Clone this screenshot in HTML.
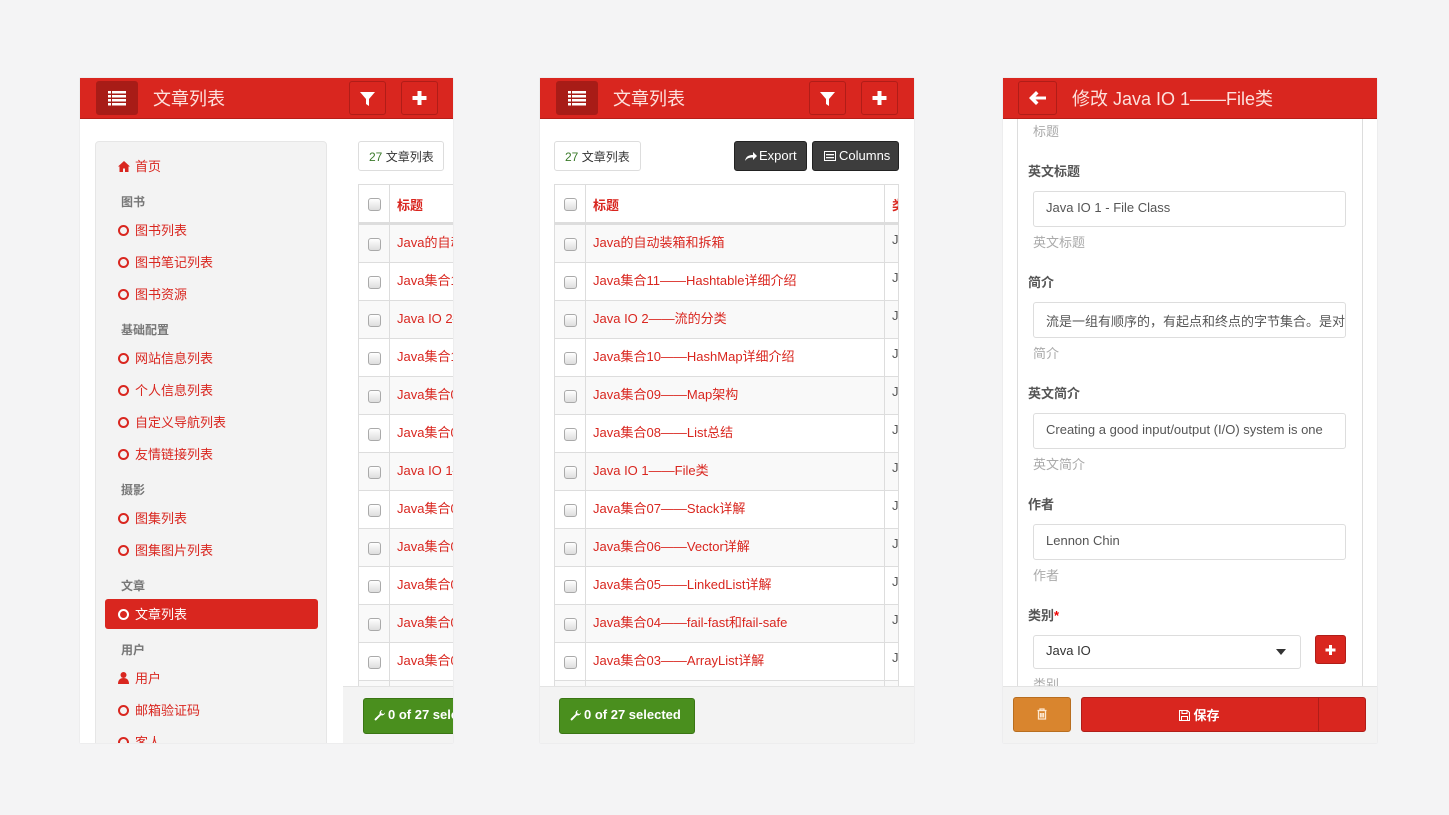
<!DOCTYPE html>
<html><head><meta charset="utf-8"><style>
*{box-sizing:border-box;margin:0;padding:0}
body{width:1449px;height:815px;background:#f4f4f5;font-family:"Liberation Sans","Noto Sans CJK SC",sans-serif;font-size:13px;color:#333;position:relative;overflow:hidden}
.a{position:absolute}
.panel{position:absolute;top:78px;height:665px;background:#fff;overflow:hidden;box-shadow:0 0 1px rgba(0,0,0,.15)}
.hdr{position:absolute;left:0;top:0;right:0;height:41px;background:#d9261f;border-bottom:1px solid #b81e18}
.hb{position:absolute;top:3px;width:37px;height:34px;border:1px solid #b01d18;border-radius:3px;background:#d9261f}
.ht{position:absolute;top:7px;color:#fde0dc;font-size:18px}
.sb{position:absolute;left:15px;top:63px;width:232px;height:620px;background:#f3f3f3;border:1px solid #e6e6e6;border-radius:4px}
.si{position:absolute;left:22px;color:#d9261f;font-size:13px;margin-top:-2px}
.si i{display:inline-block;width:11px;height:11px;border:2px solid #d9261f;border-radius:50%;margin-right:6px;vertical-align:-1px}
.sh{position:absolute;left:25px;color:#777;font-size:12px;font-weight:bold;margin-top:-2px}
.tbl{position:absolute;border:1px solid #ddd;overflow:hidden}
.row{position:absolute;left:0;height:38px;border-top:1px solid #ddd;width:100%}
.row .cb,.hrow .cb{position:absolute;left:9px;top:13px;width:13px;height:13px;border:1px solid #aaa;border-radius:3px;background:linear-gradient(#fff,#ddd)}
.row .t{position:absolute;left:38px;top:7px;color:#d9261f;white-space:nowrap}
.vl{position:absolute;top:0;bottom:0;width:1px;background:#ddd}
.bot{position:absolute;height:57px;top:608px;background:#f3f3f3;border-top:1px solid #e3e3e3}
.gbtn{position:absolute;top:11px;height:36px;background:#4a8f1e;border:1px solid #3a7514;border-radius:3px;color:#fff;font-weight:bold;font-size:13px;padding:8px 0 0 10px;white-space:nowrap;overflow:hidden}
.gbtn svg{vertical-align:-2px;margin-right:2px}
.lab{position:absolute;left:25px;font-weight:bold;color:#555;font-size:13px;margin-top:-1px}
.hint{position:absolute;left:30px;color:#aaa;font-size:13px;margin-top:-1px}
.inp{position:absolute;left:30px;width:313px;height:36px;border:1px solid #ddd;border-radius:3px;padding:8px 12px;color:#555;white-space:nowrap;overflow:hidden}
</style></head><body>

<!-- Panel 1 -->
<div class="panel" style="left:80px;width:373px">
 <div class="hdr">
  <div class="hb" style="left:16px;background:#a81c17;border-color:#a81c17;width:42px"><svg width="40" height="32" viewBox="0 0 40 32"><g fill="#fff"><rect x="11" y="9" width="3" height="2.5"/><rect x="15" y="9" width="14" height="2.5"/><rect x="11" y="13" width="3" height="2.5"/><rect x="15" y="13" width="14" height="2.5"/><rect x="11" y="17" width="3" height="2.5"/><rect x="15" y="17" width="14" height="2.5"/><rect x="11" y="21" width="3" height="2.5"/><rect x="15" y="21" width="14" height="2.5"/></g></svg></div>
  <div class="ht" style="left:73px">文章列表</div>
  <div class="hb" style="left:269px"><svg width="35" height="32"><path d="M10 10h15l-6 7v7l-3-2v-5z" fill="#fff"/></svg></div>
  <div class="hb" style="left:321px"><svg width="35" height="32"><path d="M15.5 9h4v5h5v4h-5v5h-4v-5h-5v-4h5z" fill="#fff"/></svg></div>
 </div>
 <div class="sb">
  <div class="si" style="top:16px"><svg width="12" height="11" style="margin-right:5px;vertical-align:-1px"><path d="M6 0L0 5.5h1.5V11h3.5V7.5h2V11h3.5V5.5H12z" fill="#d9261f"/></svg>首页</div>
  <div class="sh" style="top:53px">图书</div>
  <div class="si" style="top:80px"><i></i>图书列表</div>
  <div class="si" style="top:112px"><i></i>图书笔记列表</div>
  <div class="si" style="top:144px"><i></i>图书资源</div>
  <div class="sh" style="top:181px">基础配置</div>
  <div class="si" style="top:208px"><i></i>网站信息列表</div>
  <div class="si" style="top:240px"><i></i>个人信息列表</div>
  <div class="si" style="top:272px"><i></i>自定义导航列表</div>
  <div class="si" style="top:304px"><i></i>友情链接列表</div>
  <div class="sh" style="top:341px">摄影</div>
  <div class="si" style="top:368px"><i></i>图集列表</div>
  <div class="si" style="top:400px"><i></i>图集图片列表</div>
  <div class="sh" style="top:437px">文章</div>
  <div class="a" style="left:9px;top:457px;width:213px;height:30px;background:#d9261f;border-radius:3px"></div>
  <div class="si" style="top:464px;color:#fff"><i style="border-color:#fff"></i>文章列表</div>
  <div class="sh" style="top:501px">用户</div>
  <div class="si" style="top:528px"><svg width="11" height="12" style="margin-right:6px;vertical-align:-1px"><circle cx="5.5" cy="3" r="3" fill="#d9261f"/><path d="M0 12c0-4 2-6 5.5-6S11 8 11 12z" fill="#d9261f"/></svg>用户</div>
  <div class="si" style="top:560px"><i></i>邮箱验证码</div>
  <div class="si" style="top:592px"><i></i>客人</div>
 </div>
 <div class="a" style="left:278px;top:63px;width:86px;height:30px;border:1px solid #ddd;border-radius:3px;padding:6px 0 0 10px;font-size:12px;white-space:nowrap"><span style="color:#3a7a2a">27</span> 文章列表</div>
 <div class="tbl" style="left:278px;top:106px;width:110px;height:520px;border-right:none"></div>
</div>

<!-- Panel 2 -->
<div class="panel" style="left:540px;width:374px">
 <div class="hdr">
  <div class="hb" style="left:16px;background:#a81c17;border-color:#a81c17;width:42px"><svg width="40" height="32" viewBox="0 0 40 32"><g fill="#fff"><rect x="11" y="9" width="3" height="2.5"/><rect x="15" y="9" width="14" height="2.5"/><rect x="11" y="13" width="3" height="2.5"/><rect x="15" y="13" width="14" height="2.5"/><rect x="11" y="17" width="3" height="2.5"/><rect x="15" y="17" width="14" height="2.5"/><rect x="11" y="21" width="3" height="2.5"/><rect x="15" y="21" width="14" height="2.5"/></g></svg></div>
  <div class="ht" style="left:73px">文章列表</div>
  <div class="hb" style="left:269px"><svg width="35" height="32"><path d="M10 10h15l-6 7v7l-3-2v-5z" fill="#fff"/></svg></div>
  <div class="hb" style="left:321px"><svg width="35" height="32"><path d="M15.5 9h4v5h5v4h-5v5h-4v-5h-5v-4h5z" fill="#fff"/></svg></div>
 </div>
 <div class="a" style="left:14px;top:63px;width:87px;height:30px;border:1px solid #ddd;border-radius:3px;padding:6px 0 0 10px;font-size:12px;white-space:nowrap"><span style="color:#3a7a2a">27</span> 文章列表</div>
 <div class="a" style="left:194px;top:63px;width:73px;height:30px;background:#3d3d3d;border:1px solid #222;border-radius:3px;color:#fff;font-size:13px;padding:6px 0 0 10px;white-space:nowrap"><svg width="12" height="10" style="vertical-align:-1px;margin-right:2px"><path d="M0 10C1 5 4 4 8 4V1l4 4-4 4V6.5C4.5 6.5 2 7 0 10z" fill="#fff"/></svg>Export</div>
 <div class="a" style="left:272px;top:63px;width:87px;height:30px;background:#3d3d3d;border:1px solid #222;border-radius:3px;color:#fff;font-size:13px;padding:6px 0 0 11px;white-space:nowrap"><svg width="12" height="10" style="vertical-align:-1px;margin-right:3px"><rect x="0.5" y="0.5" width="11" height="9" fill="none" stroke="#fff"/><rect x="2" y="3" width="8" height="1.3" fill="#fff"/><rect x="2" y="6" width="8" height="1.3" fill="#fff"/></svg>Columns</div>
</div>

<!-- Panel 3 -->
<div class="panel" style="left:1003px;width:374px">
 <div class="a" style="left:14px;top:41px;width:346px;height:570px;border-left:1px solid #ddd;border-right:1px solid #ddd"></div>
 <div class="hdr">
  <div class="hb" style="left:15px;width:39px"><svg width="37" height="32"><path d="M10 16l7-7 2.5 2.5-3 3H27v3H16.5l3 3L17 23z" fill="#fff"/></svg></div>
  <div class="ht" style="left:69px">修改 Java IO 1——File类</div>
 </div>
 <div class="hint" style="top:44px">标题</div>
 <div class="lab" style="top:84px">英文标题</div>
 <div class="inp" style="top:113px">Java IO 1 - File Class</div>
 <div class="hint" style="top:155px">英文标题</div>
 <div class="lab" style="top:195px">简介</div>
 <div class="inp" style="top:224px">流是一组有顺序的，有起点和终点的字节集合。是对</div>
 <div class="hint" style="top:266px">简介</div>
 <div class="lab" style="top:306px">英文简介</div>
 <div class="inp" style="top:335px">Creating a good input/output (I/O) system is one</div>
 <div class="hint" style="top:377px">英文简介</div>
 <div class="lab" style="top:417px">作者</div>
 <div class="inp" style="top:446px">Lennon Chin</div>
 <div class="hint" style="top:488px">作者</div>
 <div class="lab" style="top:528px">类别<span style="color:#e00">*</span></div>
 <div class="inp" style="top:557px;width:268px;height:34px;padding-top:7px;color:#333">Java IO<svg width="10" height="6" style="position:absolute;right:14px;top:13px"><path d="M0 0h10L5 6z" fill="#333"/></svg></div>
 <div class="a" style="left:312px;top:557px;width:31px;height:29px;background:#d9261f;border:1px solid #b01d18;border-radius:3px"><svg width="29" height="27"><path d="M13 9h3v3.5h3.5v3H16V19h-3v-3.5H9.5v-3H13z" fill="#fff"/></svg></div>
 <div class="hint" style="top:597px">类别</div>
 <div class="bot" style="left:0;width:374px">
  <div class="a" style="left:10px;top:10px;width:58px;height:35px;background:#d9852e;border:1px solid #b86e20;border-radius:3px"><svg width="56" height="33"><g fill="none" stroke="#fde8d0" stroke-width="1.3"><path d="M23.5 12.5h9"/><path d="M26 12.5v-1.5h4v1.5"/><path d="M24.5 13v8h7v-8"/><path d="M26.5 15v4.5M28 15v4.5M29.5 15v4.5"/></g></svg></div>
  <div class="a" style="left:78px;top:10px;width:285px;height:35px;background:#d9261f;border:1px solid #b01d18;border-radius:3px;color:#fff;font-weight:bold;text-align:center;padding:7px 48px 0 0;font-size:13px"><svg width="11" height="11" style="vertical-align:-1px;margin-right:3px"><path d="M.5.5h8l2 2v8h-10z M3 .5v3h5v-3 M2.5 10.5v-4h6v4" fill="none" stroke="#fff" stroke-width="1"/></svg>保存</div>
  <div class="a" style="left:315px;top:11px;width:1px;height:33px;background:#b01d18"></div>
 </div>
</div>

<script>
var t1=["Java的自动装箱和拆箱","Java集合11——Hashtable详细介绍","Java IO 2——流的分类","Java集合10——HashMap详细介绍","Java集合09——Map架构","Java集合08——List总结","Java IO 1——File类","Java集合07——Stack详解","Java集合06——Vector详解","Java集合05——LinkedList详解","Java集合04——fail-fast和fail-safe","Java集合03——ArrayList详解"];
var wr='<svg width="12" height="12" viewBox="0 0 12 12"><path d="M11 3.5a3 3 0 0 1-4 2.8L2.2 11.2a1 1 0 0 1-1.4-1.4L5.7 5A3 3 0 0 1 8.5 1L7 2.5 7.5 4.5 9.5 5z" fill="#fff"/></svg>';
function tbl(left,w,titleW,extra){
 var h='<div class="tbl" style="left:'+left+'px;top:106px;width:'+w+'px;height:520px'+(extra?'':';border-right:none')+'">';
 h+='<div class="hrow" style="position:absolute;top:0;height:39px;width:100%;border-bottom:2px solid #ddd;background:#fff"><div class="cb"></div><div style="position:absolute;left:38px;top:10px;color:#d9261f;font-weight:bold">标题</div>'+(extra?'<div style="position:absolute;left:'+(31+titleW+8)+'px;top:10px;color:#d9261f;font-weight:bold">类</div>':'')+'</div>';
 for(var i=0;i<13;i++){
  h+='<div class="row" style="top:'+(39+i*38)+'px;background:'+(i%2==0?'#f9f9f9':'#fff')+'"><div class="cb"></div><div class="t">'+(t1[i]||'')+'</div>'+(extra?'<div style="position:absolute;left:'+(31+titleW+8)+'px;top:7px;color:#555">Ja</div>':'')+'</div>';
 }
 h+='<div class="vl" style="left:30px"></div>';
 if(extra)h+='<div class="vl" style="left:'+(31+titleW)+'px"></div>';
 h+='</div>';
 return h;
}
var p=document.querySelectorAll('.panel');
p[0].querySelector('.tbl').outerHTML=tbl(278,110,0,false);
p[1].insertAdjacentHTML('beforeend',tbl(14,345,298,true));
p[0].insertAdjacentHTML('beforeend','<div class="bot" style="left:263px;width:110px"><div class="gbtn" style="left:20px;width:100px">'+wr+'0 of 27 selected</div></div>');
p[1].insertAdjacentHTML('beforeend','<div class="bot" style="left:0;width:374px"><div class="gbtn" style="left:19px;width:136px">'+wr+'0 of 27 selected</div></div>');
</script>
</body></html>
